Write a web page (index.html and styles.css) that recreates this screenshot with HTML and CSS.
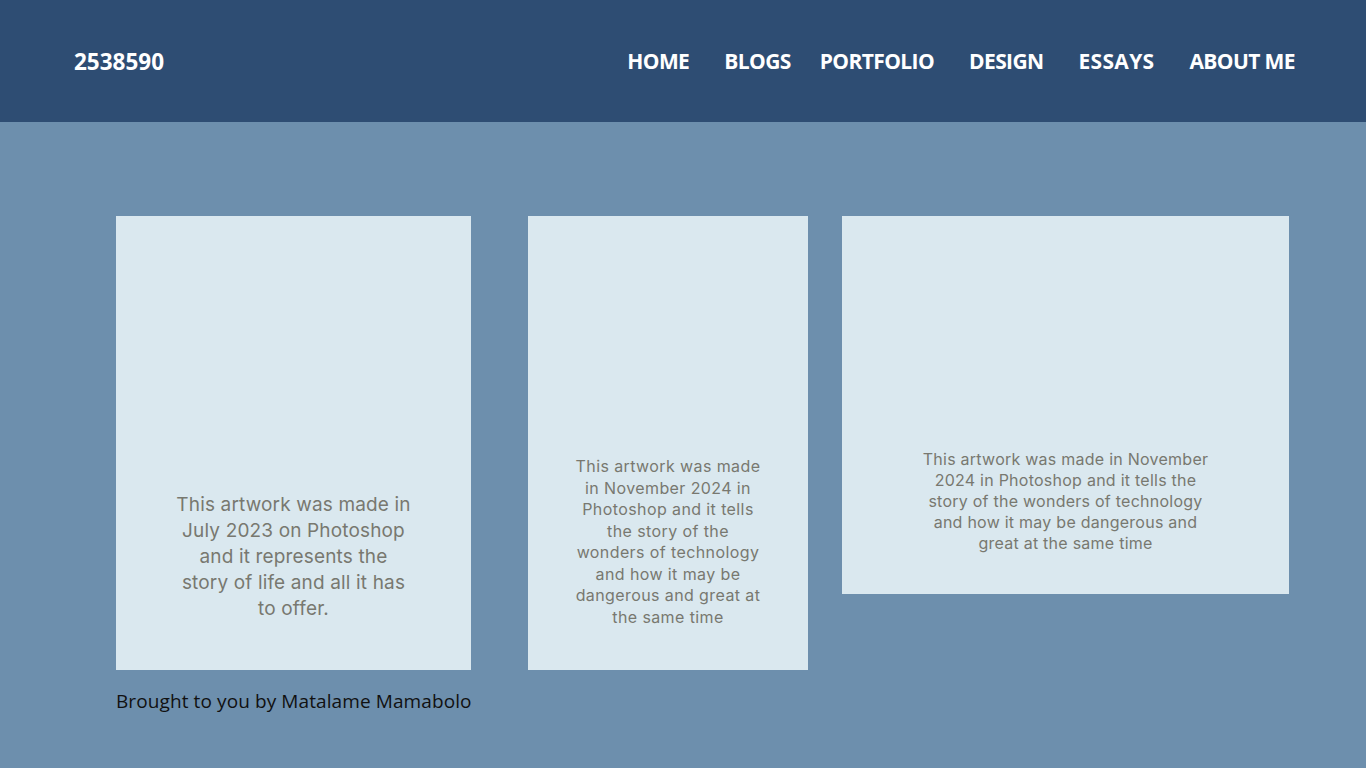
FILE: index.html
```html
<!DOCTYPE html>
<html lang="en">
<head>
<meta charset="utf-8">
<title>2538590</title>
<link rel="stylesheet" href="styles.css">
</head>
<body>
<header class="topbar">
  <div class="brand">2538590</div>
  <nav class="nav">
    <a href="#">HOME</a>
    <a href="#" class="tight">BLOGS</a>
    <a href="#">PORTFOLIO</a>
    <a href="#">DESIGN</a>
    <a href="#" class="wide">ESSAYS</a>
    <a href="#">ABOUT ME</a>
  </nav>
</header>
<main class="content">
  <section class="gallery">
    <div class="card card-a">
      <p>This artwork was made in July 2023 on Photoshop and it represents the story of life and all it has to offer.</p>
    </div>
    <div class="card card-b">
      <p>This artwork was made in November 2024 in Photoshop and it tells the story of the wonders of technology and how it may be dangerous and great at the same time</p>
    </div>
    <div class="card card-c">
      <p>This artwork was made in November 2024 in Photoshop and it tells the story of the wonders of technology and how it may be dangerous and great at the same time</p>
    </div>
  </section>
  <footer class="credit">Brought to you by Matalame Mamabolo</footer>
</main>
</body>
</html>
```

FILE: styles.css
```css
* { box-sizing: border-box; }
html, body { margin: 0; padding: 0; }
body {
  background: #6d8fad;
  min-height: 768px;
  font-family: "Open Sans", sans-serif;
}
.topbar {
  height: 122px;
  background: #2e4d73;
  display: flex;
  align-items: center;
  justify-content: space-between;
  padding: 0 71px 0 74px;
}
.brand {
  color: #fff;
  font-family: "Open Sans", sans-serif;
  font-weight: 700;
  font-size: 22.5px;
  letter-spacing: 0;
}
.nav {
  display: flex;
  gap: 35px;
}
.nav a {
  color: #fff;
  text-decoration: none;
  font-family: "Open Sans", sans-serif;
  font-weight: 700;
  font-size: 21px;
  letter-spacing: -0.6px;
}
.nav a.tight { margin-right: -6px; }
.nav a.wide { letter-spacing: 0.3px; }
.content {
  padding: 94px 0 0 116px;
}
.gallery {
  display: flex;
  align-items: flex-start;
}
.card {
  background: #dae8ef;
  color: #787870;
  font-family: Inter, sans-serif;
  text-align: center;
  display: flex;
  flex-direction: column;
  justify-content: flex-end;
  align-items: center;
}
.card p { margin: 0; }
.card-a {
  width: 355px;
  height: 454px;
  padding-bottom: 48px;
  font-size: 19px;
  line-height: 26px;
  letter-spacing: 0.15px;
}
.card-a p { width: 238px; }
.card-b {
  width: 280px;
  height: 454px;
  margin-left: 57px;
  padding-bottom: 42px;
  font-size: 16px;
  line-height: 21.5px;
  letter-spacing: 0.4px;
}
.card-b p { width: 192px; }
.card-c {
  width: 447px;
  height: 378px;
  margin-left: 34px;
  padding-bottom: 40px;
  font-size: 16px;
  line-height: 21px;
  letter-spacing: 0.25px;
}
.card-c p { width: 292px; }
.credit {
  margin-top: 18px;
  color: #111;
  font-family: "Open Sans", sans-serif;
  font-size: 19px;
  letter-spacing: 0.1px;
}
```
